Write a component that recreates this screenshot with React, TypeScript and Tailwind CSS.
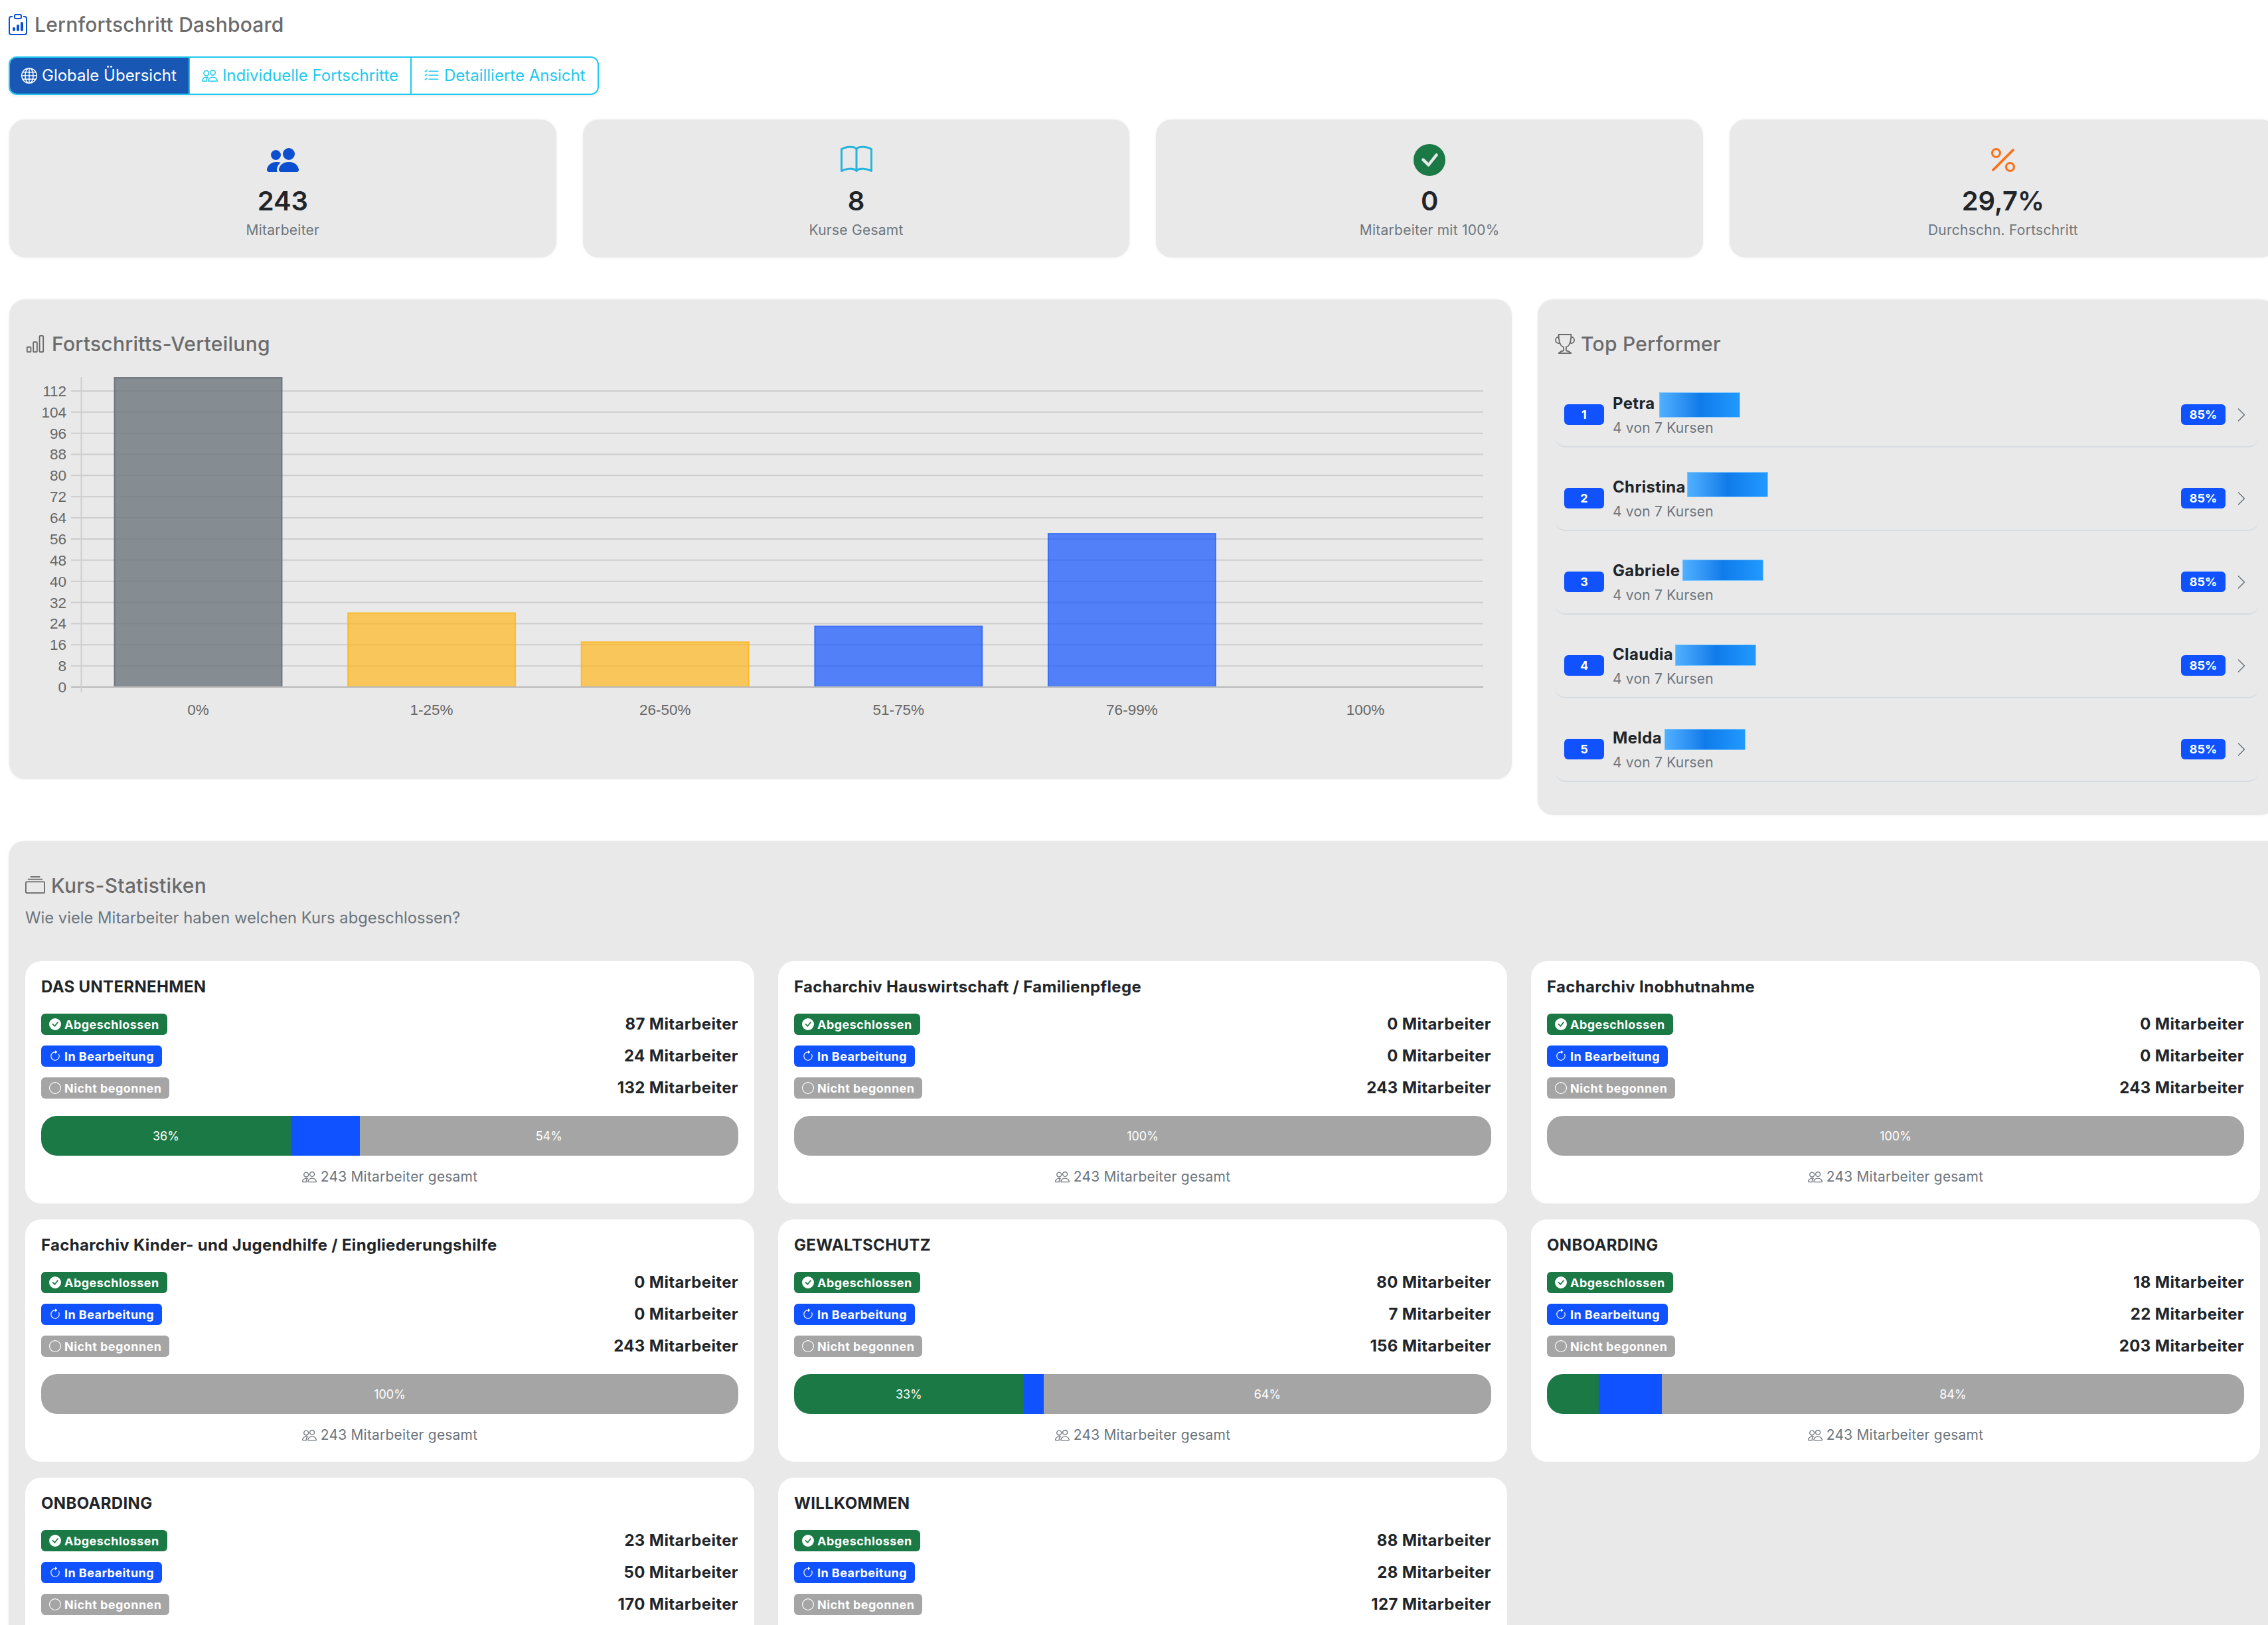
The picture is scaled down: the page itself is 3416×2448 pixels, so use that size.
import React from 'react';
import {
  BsArrowClockwise,
  BsBarChart,
  BsBook,
  BsCheckCircleFill,
  BsChevronRight,
  BsCircle,
  BsClipboardData,
  BsCollection,
  BsGlobe,
  BsListCheck,
  BsPeople,
  BsPeopleFill,
  BsPercent,
  BsTrophy,
} from 'react-icons/bs';

interface Course {
  name: string;
  done: number;
  active: number;
  open: number;
}

const stats = [
  { icon: <BsPeopleFill size={48} className="text-[#0b4fd0]" />, value: '243', label: 'Mitarbeiter' },
  { icon: <BsBook size={48} className="text-[#27b4dc]" />, value: '8', label: 'Kurse Gesamt' },
  { icon: <BsCheckCircleFill size={48} className="text-[#1b7945]" />, value: '0', label: 'Mitarbeiter mit 100%' },
  { icon: <BsPercent size={48} className="text-[#fd6f14]" />, value: '29,7%', label: 'Durchschn. Fortschritt' },
];

const performers = [
  { name: 'Petra', left: 71, top: 16, height: 38 },
  { name: 'Christina', left: 113, top: 10, height: 38 },
  { name: 'Gabriele', left: 106, top: 16, height: 32 },
  { name: 'Claudia', left: 95, top: 18, height: 32 },
  { name: 'Melda', left: 79, top: 19, height: 32 },
];

const courses: Course[] = [
  { name: 'DAS UNTERNEHMEN', done: 87, active: 24, open: 132 },
  { name: 'Facharchiv Hauswirtschaft / Familienpflege', done: 0, active: 0, open: 243 },
  { name: 'Facharchiv Inobhutnahme', done: 0, active: 0, open: 243 },
  { name: 'Facharchiv Kinder- und Jugendhilfe / Eingliederungshilfe', done: 0, active: 0, open: 243 },
  { name: 'GEWALTSCHUTZ', done: 80, active: 7, open: 156 },
  { name: 'ONBOARDING', done: 18, active: 22, open: 203 },
  { name: 'ONBOARDING', done: 23, active: 50, open: 170 },
  { name: 'WILLKOMMEN', done: 88, active: 28, open: 127 },
];

const ticks = [0, 8, 16, 24, 32, 40, 48, 56, 64, 72, 80, 88, 96, 104, 112];
const bars = [
  { label: '0%', value: 117, fill: 'rgba(108,117,125,0.8)', stroke: '#5d6670' },
  { label: '1-25%', value: 28, fill: 'rgba(253,182,29,0.7)', stroke: '#fdb515' },
  { label: '26-50%', value: 17, fill: 'rgba(253,182,29,0.7)', stroke: '#fdb515' },
  { label: '51-75%', value: 23, fill: 'rgba(16,82,255,0.7)', stroke: '#2a63f5' },
  { label: '76-99%', value: 58, fill: 'rgba(16,82,255,0.7)', stroke: '#2a63f5' },
  { label: '100%', value: 0, fill: 'rgba(16,82,255,0.7)', stroke: '#2a63f5' },
];

const yFor = (v: number) => 1035 - v * 3.983;

// viewBox uses page coordinates, so the numbers can be read off the screenshot
const Chart = () => (
  <svg viewBox="38 560 2210 530" width={2210} height={530} className="block">
    {ticks.map(t => (
      <g key={t}>
        <line x1={107} x2={2234} y1={yFor(t)} y2={yFor(t)} stroke={t === 0 ? '#b9b9b9' : '#cdcdcd'} strokeWidth={2} />
        <text x={100} y={yFor(t) + 8} textAnchor="end" fontSize={22.5} fill="#666666" fontFamily="'Liberation Sans', sans-serif">
          {t}
        </text>
      </g>
    ))}
    <line x1={122.5} x2={122.5} y1={568} y2={1043} stroke="#cdcdcd" strokeWidth={2} />
    {bars.map((b, i) => {
      const x = 172.5 + i * 351.6;
      const top = yFor(b.value);
      return (
        <g key={b.label}>
          {b.value > 0 && (
            <>
              <rect x={x} y={top} width={252} height={1034 - top} fill={b.fill} />
              <path d={`M${x} 1034V${top}H${x + 252}V1034`} fill="none" stroke={b.stroke} strokeWidth={2} strokeOpacity={0.8} />
            </>
          )}
          <text x={x + 126} y={1077} textAnchor="middle" fontSize={22.5} fill="#666666" fontFamily="'Liberation Sans', sans-serif">
            {b.label}
          </text>
        </g>
      );
    })}
  </svg>
);

const StatusRow = ({ className, icon, label, count }: { className: string; icon: React.ReactNode; label: string; count: number }) => (
  <div className="flex items-center justify-between h-[32px]">
    <span className={`flex items-center h-[32px] px-[12px] gap-[5px] rounded-[6px] text-white text-[18px] font-bold tracking-[0.45px] ${className}`}>
      {icon}
      {label}
    </span>
    <span className="text-[24px] font-[650] tracking-[0.35px] text-[#212529]">{count} Mitarbeiter</span>
  </div>
);

const CourseCard = ({ course }: { course: Course }) => {
  const total = course.done + course.active + course.open;
  const segments = [
    { value: course.done, className: 'bg-[#1b7945]' },
    { value: course.active, className: 'bg-[#1052ff]' },
    { value: course.open, className: 'bg-[#a5a5a5]' },
  ];
  return (
    <div className="bg-white rounded-[24px] h-[365px] px-[24px] pt-[22px]">
      <h3 className="text-[24px] leading-[34px] font-[650] tracking-[0.33px] text-[#212529] h-[34px]">{course.name}</h3>
      <div className="flex flex-col gap-[16px] mt-[23px]">
        <StatusRow className="bg-[#1b7945]" icon={<BsCheckCircleFill size={18} />} label="Abgeschlossen" count={course.done} />
        <StatusRow className="bg-[#1052ff]" icon={<BsArrowClockwise size={18} />} label="In Bearbeitung" count={course.active} />
        <StatusRow className="bg-[#a5a5a5]" icon={<BsCircle size={18} />} label="Nicht begonnen" count={course.open} />
      </div>
      <div className="flex h-[60px] mt-[26px] rounded-[24px] overflow-hidden">
        {segments.map((s, i) => {
          const pct = Math.round((s.value / total) * 100);
          if (!s.value) return null;
          return (
            <div
              key={i}
              className={`flex items-center justify-center text-white text-[18px] ${s.className}`}
              style={{ width: `${(s.value / total) * 100}%` }}
            >
              {pct >= 25 ? `${pct}%` : ''}
            </div>
          );
        })}
      </div>
      <div className="flex items-center justify-center gap-[6px] mt-[18px] text-[21px] leading-[28px] tracking-[0.2px] text-[#6c757d]">
        <BsPeople size={22} />
        {total} Mitarbeiter gesamt
      </div>
    </div>
  );
};

const panel = 'bg-[#e9e9e9] rounded-[24px] shadow-[0_0_4px_rgba(0,0,0,0.06)]';
const heading = 'flex items-center h-[38px] text-[30px] font-[550] tracking-[0.28px] text-[#6b6b6b]';

const App: React.FC = () => {
  return (
    <div className="w-[3416px] h-[2448px] overflow-hidden bg-white font-['Inter',sans-serif]">
      <div className="flex items-center gap-[9px] h-[74px] pl-[11px] text-[#6b6b6b]">
        <BsClipboardData size={32} className="text-[#0b4fd0]" />
        <h1 className="text-[30px] font-[550] tracking-[0.2px]">Lernfortschritt Dashboard</h1>
      </div>

      <div className="flex w-fit h-[58px] ml-[13px] mt-[11px] rounded-[12px] overflow-hidden border-2 border-[#1fc8ef] shadow-[0_2px_4px_rgba(0,0,0,0.08)] text-[24px] text-[#1fc8ef]">
        <div className="flex items-center gap-[7px] pl-[19px] pr-[18px] -ml-[2px] -my-[2px] bg-[#1857b3] text-white">
          <BsGlobe size={24} />
          Globale Übersicht
        </div>
        <div className="flex items-center gap-[7px] px-[18px] border-l-2 border-r-2 border-[#1fc8ef]">
          <BsPeople size={24} />
          Individuelle Fortschritte
        </div>
        <div className="flex items-center gap-[7px] px-[18px]">
          <BsListCheck size={24} />
          Detaillierte Ansicht
        </div>
      </div>

      <div className="flex gap-[40px] ml-[14px] mt-[37px]">
        {stats.map(s => (
          <div key={s.label} className={`${panel} w-[823.7px] shrink-0 h-[208px] flex flex-col items-center pt-[37px]`}>
            {s.icon}
            <div className="text-[40px] leading-[48px] font-semibold text-[#212529] mt-[14px]">{s.value}</div>
            <div className="text-[21px] leading-[28px] tracking-[0.25px] text-[#6c757d] mt-[6px]">{s.label}</div>
          </div>
        ))}
      </div>

      <div className="flex items-start gap-[39px] ml-[14px] mt-[63px]">
        <div className={`${panel} w-[2263px] h-[723px] shrink-0 pt-[48px] pl-[24px]`}>
          <div className={`${heading} gap-[10px]`}>
            <BsBarChart size={30} />
            Fortschritts-Verteilung
          </div>
          <div className="mt-[23px]">
            <Chart />
          </div>
        </div>

        <div className={`${panel} w-[1112px] h-[777px] shrink-0 pt-[48px] pl-[26px] pr-[26px]`}>
          <div className={`${heading} gap-[9px]`}>
            <BsTrophy size={30} />
            Top Performer
          </div>
          <div className="flex flex-col gap-[27px] mt-[38px]">
            {performers.map((p, i) => (
              <div key={p.name} className="flex items-center h-[99px] pl-[14px] pr-[14px] pt-[2px] rounded-b-[16px] border-b-2 border-[#d5dbe0]">
                <span className="flex items-center justify-center w-[60px] h-[31px] rounded-[6px] bg-[#1052ff] text-white text-[18px] font-bold">
                  {i + 1}
                </span>
                <div className="relative ml-[13px] flex-1 self-stretch pt-[17px]">
                  <div className="text-[24px] leading-[28px] font-[650] tracking-[0.35px] text-[#212529]">{p.name}</div>
                  <div className="text-[21px] leading-[28px] tracking-[0.2px] mt-[9px] text-[#6c757d]">4 von 7 Kursen</div>
                  <div
                    className="absolute w-[122px] border border-[#7cc4ff] bg-gradient-to-r from-[#4fb0ff] via-[#0f7bea] to-[#2299ff]"
                    style={{ left: p.left - 1, top: p.top - 2, height: p.height }}
                  />
                </div>
                <span className="flex items-center justify-center w-[67px] h-[31px] rounded-[6px] bg-[#1052ff] text-white text-[18px] font-bold">
                  85%
                </span>
                <BsChevronRight size={24} className="ml-[12px] text-[#6c757d]" />
              </div>
            ))}
          </div>
        </div>
      </div>

      <div className={`${panel} w-[3430px] ml-[13px] mt-[39px] h-[1400px] px-[25px] pt-[48px]`}>
        <div className={`${heading} gap-[9px]`}>
          <BsCollection size={30} />
          Kurs-Statistiken
        </div>
        <p className="text-[23.8px] leading-[32px] text-[#6c757d] mt-[14px]">Wie viele Mitarbeiter haben welchen Kurs abgeschlossen?</p>
        <div className="grid grid-cols-[1098px_1098px_1098px] gap-x-[36px] gap-y-[24px] mt-[49px]">
          {courses.map((c, i) => (
            <CourseCard key={i} course={c} />
          ))}
        </div>
      </div>
    </div>
  );
};

export default App;
